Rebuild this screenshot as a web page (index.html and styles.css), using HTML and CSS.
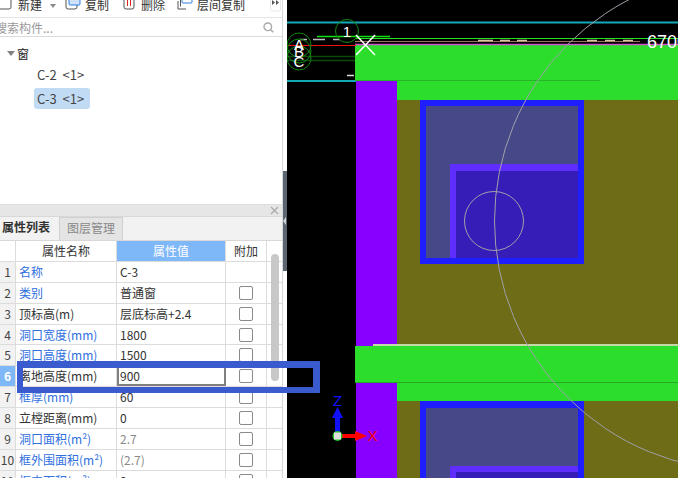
FILE: index.html
```html
<!DOCTYPE html>
<html lang="zh-CN">
<head>
<meta charset="utf-8">
<title>属性列表</title>
<link rel="stylesheet" href="styles.css">
</head>
<body>
<div class="app">
  <aside class="side">
    <div class="toolbar">
      <div class="tool tool-new">
        <svg class="ico" width="13" height="14" viewBox="0 0 13 14"><rect x="-2" y="-2" width="13" height="13" rx="2" fill="#fff" stroke="#555"/></svg>
        <span>新建</span>
        <svg class="caret" width="6" height="4" viewBox="0 0 6 4"><path d="M0 0h6L3 4z" fill="#888"/></svg>
      </div>
      <div class="tool tool-copy">
        <svg class="ico" width="16" height="14" viewBox="0 0 16 14"><rect x="1" y="-2" width="11" height="13" rx="2" fill="#fff" stroke="#555"/><rect x="4" y="-4" width="11" height="11" rx="1" fill="#cfe2f9" stroke="#2f7fe0"/></svg>
        <span>复制</span>
      </div>
      <div class="tool tool-del">
        <svg class="ico" width="12" height="14" viewBox="0 0 12 14"><rect x="1" y="-3" width="10" height="14" rx="2" fill="#fff" stroke="#555"/><path d="M4.500 2v6M7.500 2v6" stroke="#d22" stroke-width="1"/></svg>
        <span>删除</span>
      </div>
      <div class="tool tool-floor">
        <svg class="ico" width="16" height="14" viewBox="0 0 16 14"><path d="M3.500 1v7.500M1 3v8h8" fill="none" stroke="#555"/><rect x="5" y="-4" width="10" height="9" rx="1" fill="#fff" stroke="#2f7fe0"/></svg>
        <span>层间复制</span>
      </div>
      <div class="more">
        <svg class="more-btn" width="11" height="12" viewBox="0 0 11 12"><rect x=".5" y="-3" width="10" height="14" rx="2" fill="#fff" stroke="#e6e6e6"/><path d="M2 0l3 2.500L2 5zM6 0l3 2.500L6 5z" fill="#555"/></svg>
      </div>
    </div>
    <div class="search">
      <span class="search-text">搜索构件...</span>
      <svg width="11" height="11" viewBox="0 0 11 11"><circle cx="4.800" cy="4.800" r="3.800" fill="none" stroke="#aaa" stroke-width="1.400"/><path d="M7.700 7.700 10.300 10.300" stroke="#aaa" stroke-width="1.600"/></svg>
    </div>
    <div class="tree">
      <div class="tree-group"><i class="tri"></i><span>窗</span></div>
      <div class="tree-item">C-2&nbsp;&nbsp;&lt;1&gt;</div>
      <div class="tree-item selected">C-3&nbsp;&nbsp;&lt;1&gt;</div>
    </div>
    <div class="props">
      <div class="props-head">
        <svg width="9" height="9" viewBox="0 0 9 9"><path d="M1 1l7 7M8 1 1 8" stroke="#aaa" stroke-width="1.200"/></svg>
      </div>
      <div class="tabs">
        <div class="tab active">属性列表</div>
        <div class="tab">图层管理</div>
      </div>
      <div class="table">
        <div class="row row-head"><div class="c-n"></div><div class="c-name">属性名称</div><div class="c-val val-head">属性值</div><div class="c-add">附加</div></div>
        <div class="row"><div class="c-n">1</div><div class="c-name link">名称</div><div class="c-val">C-3</div><div class="c-add"></div></div>
        <div class="row"><div class="c-n">2</div><div class="c-name link">类别</div><div class="c-val">普通窗</div><div class="c-add"><i class="check"></i></div></div>
        <div class="row"><div class="c-n">3</div><div class="c-name">顶标高(m)</div><div class="c-val">层底标高+2.4</div><div class="c-add"><i class="check"></i></div></div>
        <div class="row"><div class="c-n">4</div><div class="c-name link">洞口宽度(mm)</div><div class="c-val">1800</div><div class="c-add"><i class="check"></i></div></div>
        <div class="row"><div class="c-n">5</div><div class="c-name link">洞口高度(mm)</div><div class="c-val">1500</div><div class="c-add"><i class="check"></i></div></div>
        <div class="row row-sel"><div class="c-n">6</div><div class="c-name">离地高度(mm)</div><div class="c-val editing">900</div><div class="c-add"><i class="check"></i></div></div>
        <div class="row"><div class="c-n">7</div><div class="c-name link">框厚(mm)</div><div class="c-val">60</div><div class="c-add"><i class="check"></i></div></div>
        <div class="row"><div class="c-n">8</div><div class="c-name">立樘距离(mm)</div><div class="c-val">0</div><div class="c-add"><i class="check"></i></div></div>
        <div class="row"><div class="c-n">9</div><div class="c-name link">洞口面积(m²)</div><div class="c-val muted">2.7</div><div class="c-add"><i class="check"></i></div></div>
        <div class="row"><div class="c-n">10</div><div class="c-name link">框外围面积(m²)</div><div class="c-val muted">(2.7)</div><div class="c-add"><i class="check"></i></div></div>
        <div class="row"><div class="c-n">11</div><div class="c-name link">框内面积(m²)</div><div class="c-val">0</div><div class="c-add"><i class="check"></i></div></div>
        <div class="scroll-thumb"></div>
      </div>
    </div>
  </aside>
  <div class="splitter"><i class="grip"></i></div>
  <main class="canvas">
    <svg class="cad" width="391" height="478" viewBox="287 0 391 478">
      <rect x="287" y="0" width="391" height="478" fill="#000"/>
      <!-- cyan axis lines -->
      <path d="M287 22.500H678M287 81H356" stroke="#12a9b9" stroke-width="2"/>
      <!-- wall, beams and floor -->
      <rect x="397" y="81" width="281" height="397" fill="#6f6c17"/>
      <rect x="356" y="81" width="41" height="397" fill="#8800ff"/>
      <rect x="355" y="45" width="323" height="36" fill="#2cdd2c"/>
      <rect x="397" y="81" width="281" height="19" fill="#2cdd2c"/>
      <path d="M355 80.500H600" stroke="#28b428" stroke-width="1"/>
      <rect x="373" y="344" width="305" height="2" fill="#c4d8a8"/>
      <rect x="355" y="346" width="323" height="36" fill="#2cdd2c"/>
      <path d="M355 382.500H678" stroke="#28a828" stroke-width="1"/>
      <rect x="397" y="383" width="281" height="18" fill="#2cdd2c"/>
      <!-- upper window -->
      <rect x="420" y="100" width="164" height="164" fill="#1e1eff"/>
      <rect x="426" y="106" width="152" height="152" fill="#464888"/>
      <rect x="450" y="164" width="128" height="94" fill="#5f2eff"/>
      <rect x="456" y="171" width="122" height="87" fill="#371db8"/>
      <!-- lower window -->
      <rect x="420" y="401" width="164" height="77" fill="#1e1eff"/>
      <rect x="426" y="408" width="152" height="70" fill="#464888"/>
      <rect x="450" y="466" width="128" height="12" fill="#5f2eff"/>
      <rect x="456" y="472" width="122" height="6" fill="#371db8"/>
      <!-- top detail lines -->
      <path d="M355 38.500H678" stroke="#23e023" stroke-width="1"/>
      <path d="M355 44.500H678" stroke="#d050d0" stroke-width="1.500"/>
      <path d="M355 41.500H640" stroke="#a07060" stroke-width="1"/>
      <path d="M478 40.500h15m7 0h10m7 0h10m60 0h10m8 0h10m8 0h10" stroke="#d8c8a0" stroke-width="1.500"/>
      <path d="M317 36.500H390" stroke="#12e012" stroke-width="1.500"/>
      <path d="M287 45.500H356" stroke="#f01010" stroke-width="1"/>
      <path d="M300 39.500h7m6 0h12m8 0h7" stroke="#bbb" stroke-width="1.500"/>
      <path d="M287 56.500H355M287 60.500H355" stroke="#0a4a0a" stroke-width="1.500"/>
      <path d="M347 75.500h7" stroke="#ddd" stroke-width="1.500"/>
      <!-- axis bubbles -->
      <g fill="none" stroke="#0f8a0f" stroke-width="1">
        <circle cx="347" cy="31" r="11.500"/>
        <circle cx="299" cy="45" r="12"/>
        <circle cx="299" cy="51" r="12"/>
        <circle cx="299" cy="58" r="12"/>
      </g>
      <g class="bubble-text" fill="#fff" text-anchor="middle">
        <text x="347" y="37">1</text>
        <text x="299" y="50">A</text>
        <text x="299" y="57">B</text>
        <text x="299" y="67">C</text>
      </g>
      <path d="M356 35 375 55M375 35 356 55" stroke="#fff" stroke-width="1.500"/>
      <text class="dim" x="647" y="48" fill="#fff">6700</text>
      <!-- circles -->
      <g fill="none" stroke="#a0a0aa" stroke-width="1">
        <circle cx="494" cy="221" r="29.500"/>
        <circle cx="744" cy="221" r="249.500"/>
      </g>
      <!-- axis gizmo -->
      <rect x="335" y="418" width="5" height="15" fill="#1010ff"/>
      <path d="M332 418 337.500 407 343 418z" fill="#1010ff"/>
      <rect x="341" y="434" width="14" height="4" fill="#f00"/>
      <path d="M355 431 367 436 355 441z" fill="#f00"/>
      <circle cx="337.500" cy="436" r="5" fill="#1ec81e"/>
      <rect x="334" y="432.500" width="7" height="7" fill="#ddd"/>
      <text class="axis" x="337.500" y="406" fill="#1010ff" text-anchor="middle">Z</text>
      <text class="axis" x="372.500" y="441" fill="#f00" text-anchor="middle">X</text>
    </svg>
  </main>
  <div class="highlight"></div>
</div>
</body>
</html>
```
FILE: styles.css
```css
html, body {
  margin: 0;
  padding: 0;
  width: 678px;
  height: 478px;
  overflow: hidden;
  background: #fff;
}
.app {
  position: relative;
  display: flex;
  width: 678px;
  height: 478px;
  overflow: hidden;
  font-family: "Noto Sans CJK SC", "Noto Sans", sans-serif;
  font-size: 12px;
  color: #333;
}
.side {
  width: 282px;
  height: 478px;
  display: flex;
  flex-direction: column;
  flex: none;
  background: #fff;
  border-right: 1px solid #d8d8d8;
}
.toolbar {
  display: flex;
  align-items: flex-end;
  height: 12px;
  padding-bottom: 5px;
  flex: none;
}
.tool {
  display: flex;
  align-items: flex-end;
  line-height: 14px;
  white-space: nowrap;
}
.tool span { margin-left: 5px; }
.ico { flex: none; }
.caret { margin: 0 0 4px 8px; }
.tool-copy { margin-left: 9px; }
.tool-copy span { margin-left: 4px; }
.tool-del { margin-left: 14px; }
.tool-del span { margin-left: 6px; }
.tool-floor { margin-left: 12px; }
.tool-floor span { margin-left: 4px; }
.more { margin-left: auto; margin-right: 1px; height: 12px; }
.more-btn { display: block; }
.search {
  display: flex;
  align-items: center;
  justify-content: space-between;
  height: 18px;
  padding: 0 8px 0 0;
  border-top: 1px solid #e4e4e4;
  border-bottom: 1px solid #dcdcdc;
  flex: none;
  overflow: hidden;
}
.search-text {
  margin-left: -5px;
  color: #9a9a9a;
  white-space: nowrap;
}
.tree {
  flex: 1;
  padding-top: 5px;
}
.tree-group {
  display: flex;
  align-items: center;
  height: 22px;
  padding-left: 7px;
  color: #222;
}
.tri {
  width: 0;
  height: 0;
  border: 4px solid transparent;
  border-top: 5px solid #808080;
  border-bottom: 0;
  margin-right: 2px;
  margin-top: 1px;
}
.tree-item {
  width: 50px;
  height: 21px;
  margin: 3px 0 0 34px;
  padding-left: 3px;
  line-height: 21px;
  font-size: 13px;
  color: #444;
  white-space: nowrap;
}
.tree-group + .tree-item { margin-top: 0; }
.tree-item.selected {
  background: #c2dbf4;
  border-radius: 3px;
  width: 53px;
}
.props {
  height: 273px;
  flex: none;
  display: flex;
  flex-direction: column;
  background: #f0f0f0;
  border-top: 1px solid #dedede;
}
.props-head {
  display: flex;
  justify-content: flex-end;
  align-items: center;
  height: 11px;
  padding: 0 3px 0 0;
  background: #e6e6e6;
  border-bottom: 1px solid #d8d8d8;
  flex: none;
}
.tabs {
  display: flex;
  height: 23px;
  flex: none;
  background: #f2f2f2;
}
.tab {
  width: 64px;
  line-height: 20px;
  text-align: center;
  color: #888;
  background: #e4e4e4;
  border: 1px solid #d0d0d0;
  border-bottom: 0;
  box-sizing: border-box;
}
.tab.active {
  width: 58px;
  margin-right: 1px;
  color: #333;
  font-weight: 700;
  background: #f2f2f2;
  border: 0;
  text-align: right;
  padding-right: 8px;
  white-space: nowrap;
}
.table {
  position: relative;
  flex: 1;
  background: #fff;
  overflow: hidden;
  border-top: 1px solid #d8d8d8;
}
.row {
  display: grid;
  grid-template-columns: 16px 101px 109px 41px;
  height: 20.900px;
  line-height: 19px;
  box-sizing: border-box;
  border-bottom: 1px solid #dcdcdc;
  white-space: nowrap;
}
.row > div {
  border-right: 1px solid #dcdcdc;
  overflow: hidden;
  box-sizing: border-box;
}
.c-n {
  background: #f2f2f2;
  text-align: center;
  color: #444;
}
.c-name {
  padding-left: 3px;
  color: #333;
}
.c-val {
  padding-left: 3px;
  color: #333;
}
.c-add {
  display: flex;
  align-items: center;
  justify-content: center;
}
.row-head .c-name { text-align: center; padding-left: 0; }
.row-head .c-n { background: #fff; }
.val-head {
  background: #7fb8f8;
  color: #fff;
  text-align: center;
  padding-left: 0;
}
.link { color: #2f6fe0; }
.muted { color: #8a8a8a; }
.row-sel .c-n {
  background: #7fb8f8;
  color: #fff;
  font-weight: 700;
}
.editing {
  border: 2px solid #808080 !important;
  padding-left: 1px;
  line-height: 16px;
}
.check {
  display: block;
  width: 12px;
  height: 12px;
  border: 1px solid #8a8a8a;
  border-radius: 2px;
  background: #fff;
}
.scroll-thumb {
  position: absolute;
  left: 271px;
  top: 13px;
  width: 8px;
  height: 127px;
  background: #c8c8c8;
  border-radius: 4px;
}
.splitter {
  position: relative;
  width: 4px;
  height: 478px;
  flex: none;
  background: #fff;
}
.grip {
  position: absolute;
  left: 0;
  top: 171px;
  width: 4px;
  height: 100px;
  background: #5c6670;
}
.grip::after {
  content: "";
  position: absolute;
  left: 0;
  top: 46px;
  border: 4px solid transparent;
  border-right: 3px solid #cfd4d8;
  border-left: 0;
}
.canvas {
  flex: none;
  width: 391px;
  height: 478px;
}
.cad { display: block; }
.bubble-text {
  font-family: "Liberation Sans", sans-serif;
  font-size: 15px;
}
.dim {
  font-family: "Liberation Sans", sans-serif;
  font-size: 18px;
}
.axis {
  font-family: "Liberation Sans", sans-serif;
  font-size: 15px;
}
.highlight {
  position: absolute;
  left: 17px;
  top: 361px;
  width: 290px;
  height: 19px;
  border-style: solid;
  border-color: #3a5bcd;
  border-width: 7px 7px 6px 6px;
}
```
